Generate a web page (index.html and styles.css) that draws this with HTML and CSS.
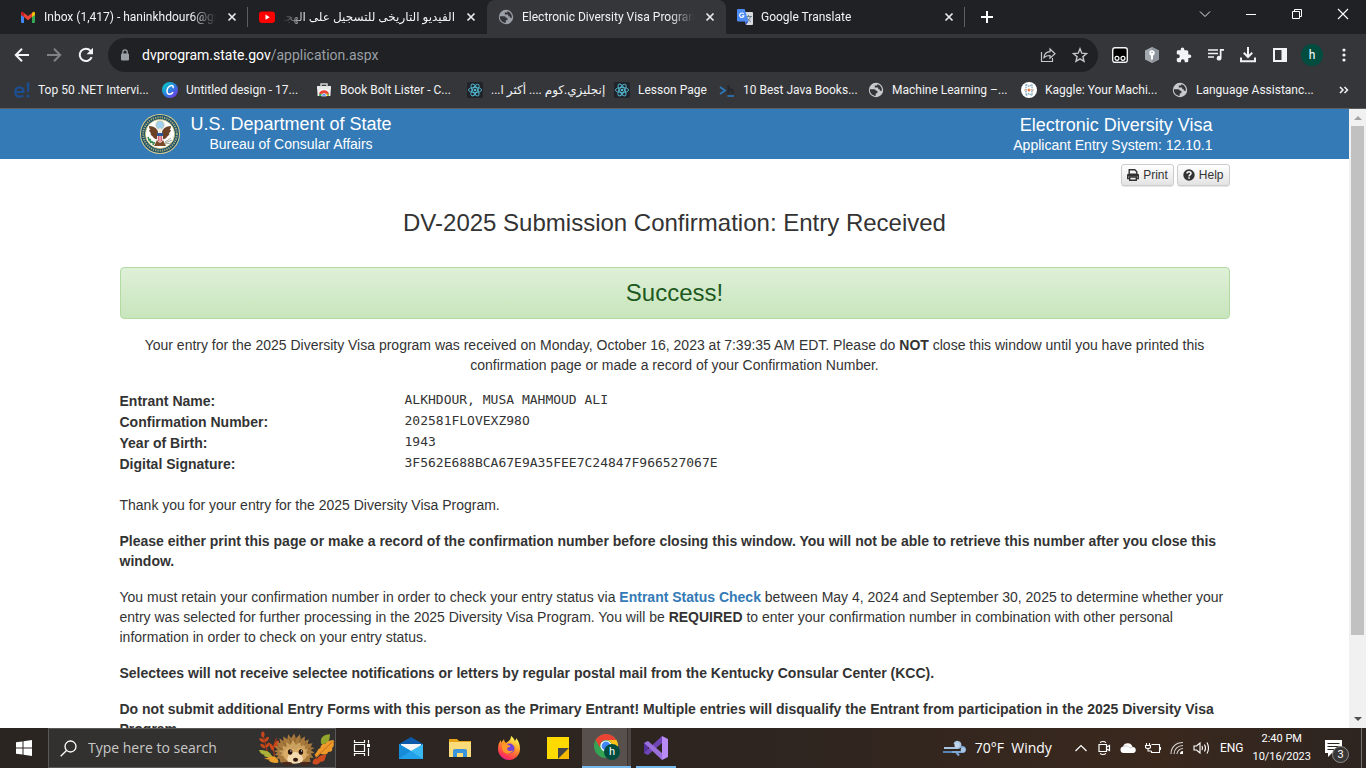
FILE: index.html
```
<!DOCTYPE html>
<html lang="en">
<head>
<meta charset="utf-8">
<title>Electronic Diversity Visa Program</title>
<link rel="stylesheet" href="styles.css">
</head>
<body>
<svg class="sprite" aria-hidden="true">
  <symbol id="close" viewBox="0 0 16 16"><path d="M4.500 4.500l7 7M11.500 4.500l-7 7" stroke="#e8eaed" stroke-width="1.700" fill="none"/></symbol>
  <symbol id="globe" viewBox="0 0 16 16"><circle cx="8" cy="8" r="7.200" fill="currentColor"/><path d="M1.800 7.200h4.400c1.400 0 1.600.8 1.600 1.600h1.600v2.400H7.800v2.600c-3.400 0-6-2.700-6-6.600zM9.300 2.200v1.200H6.800v2h3.400v1.800h1.600v1.600h2.100c.3-3.300-1.700-5.900-4.600-6.600z" fill="#33343a"/></symbol>
  <symbol id="react" viewBox="0 0 16 16"><rect width="16" height="16" rx="1.500" fill="#20232a"/><g fill="none" stroke="#53b9d1" stroke-width=".9"><ellipse cx="8" cy="8" rx="6.600" ry="2.600"/><ellipse cx="8" cy="8" rx="6.600" ry="2.600" transform="rotate(60 8 8)"/><ellipse cx="8" cy="8" rx="6.600" ry="2.600" transform="rotate(120 8 8)"/></g><circle cx="8" cy="8" r="1.300" fill="#53b9d1"/></symbol>
  <symbol id="chrome" viewBox="0 0 24 24"><circle cx="12" cy="12" r="12" fill="#34a353"/><path d="M1.600 6A12 12 0 0 1 22.400 6H12a6 6 0 0 0-5.200 9z" fill="#ea4335"/><path d="M22.400 6A12 12 0 0 1 12 24l5.200-9A6 6 0 0 0 12 6z" fill="#fbc116"/><circle cx="12" cy="12" r="5.600" fill="#fff"/><circle cx="12" cy="12" r="4.400" fill="#4285f4"/></symbol>
</svg>

<header class="browser">
  <div class="tabstrip">
    <div class="tab sep">
      <svg class="i16" viewBox="0 0 16 16"><path d="M1 4v9a1 1 0 0 0 1 1h2V7z" fill="#4285f4"/><path d="M15 4v9a1 1 0 0 1-1 1h-2V7z" fill="#34a853"/><path d="M12 4l1-1c1-.6 2 .1 2 1.200v1.700l-3 2.200z" fill="#fbbc04"/><path d="M4 8V4l4 3 4-3v4l-4 3.200z" fill="#ea4335"/><path d="M1 5.900V4.200C1 3 2 2.400 3 3l1 1v4.100z" fill="#c5221f"/></svg>
      <span class="tab-title">Inbox (1,417) - haninkhdour6@gmail.com</span>
      <button class="icon-btn" aria-label="Close tab"><svg class="i16"><use href="#close"/></svg></button>
    </div>
    <div class="tab">
      <svg class="i16" viewBox="0 0 16 16"><rect y="2.500" width="16" height="11.500" rx="3" fill="#f00"/><path d="M6.500 5.600v5.200l4.300-2.600z" fill="#fff"/></svg>
      <span class="tab-title rtl" dir="rtl">الفيديو التاريخى للتسجيل على الهجرة العشوائية</span>
      <button class="icon-btn" aria-label="Close tab"><svg class="i16"><use href="#close"/></svg></button>
    </div>
    <div class="tab active">
      <svg class="i16 gray"><use href="#globe"/></svg>
      <span class="tab-title">Electronic Diversity Visa Program Application</span>
      <button class="icon-btn" aria-label="Close tab"><svg class="i16"><use href="#close"/></svg></button>
    </div>
    <div class="tab sep">
      <svg class="i16" viewBox="0 0 16 16"><path d="M6 3h9a1 1 0 0 1 1 1v11a1 1 0 0 1-1 1H9z" fill="#d8dce0"/><path d="M8.500 7.500H15M11.500 6v1.500M13.500 7.500c-.5 2.500-2 4-3.500 5M10 8.500c.8 1.800 2 3.200 4 4" stroke="#68808c" fill="none"/><path d="M1 0h6.600l3.900 12.600H1a1 1 0 0 1-1-1V1a1 1 0 0 1 1-1z" fill="#4c8bf5"/><path d="M8 12.600h3.500L9 16z" fill="#3257c9"/><path d="M6.700 5A2.200 2.200 0 1 0 7 6.700H4.900" stroke="#fff" stroke-width="1.100" fill="none"/></svg>
      <span class="tab-title">Google Translate</span>
      <button class="icon-btn" aria-label="Close tab"><svg class="i16"><use href="#close"/></svg></button>
    </div>
    <button class="icon-btn newtab" aria-label="New tab"><svg viewBox="0 0 14 14" width="14" height="14"><path d="M7 1v12M1 7h12" stroke="#fff" stroke-width="2"/></svg></button>
    <div class="win">
      <button class="icon-btn" aria-label="Search tabs"><svg width="12" height="12" viewBox="0 0 12 12"><path d="M1 3.500l5 5 5-5" stroke="#e8eaed" fill="none"/></svg></button>
      <button class="icon-btn" aria-label="Minimize"><svg width="12" height="12" viewBox="0 0 12 12"><path d="M1 6.500h10" stroke="#fff"/></svg></button>
      <button class="icon-btn" aria-label="Restore"><svg width="12" height="12" viewBox="0 0 12 12"><path d="M1.500 3.500h7v7h-7zM3.500 3.500v-2h7v7h-2" stroke="#fff" fill="none"/></svg></button>
      <button class="icon-btn" aria-label="Close"><svg width="12" height="12" viewBox="0 0 12 12"><path d="M1 1l10 10M11 1L1 11" stroke="#fff" stroke-width="1.100"/></svg></button>
    </div>
  </div>

  <div class="toolbar">
    <button class="icon-btn" aria-label="Back"><svg width="16" height="16" viewBox="0 0 16 16"><path d="M15 8H2M8 1.800L1.800 8 8 14.200" stroke="#f1f3f4" stroke-width="2" fill="none"/></svg></button>
    <button class="icon-btn" aria-label="Forward"><svg width="16" height="16" viewBox="0 0 16 16"><path d="M1 8h13M8 1.800L14.200 8 8 14.200" stroke="#808286" stroke-width="2" fill="none"/></svg></button>
    <button class="icon-btn" aria-label="Reload"><svg width="16" height="16" viewBox="0 0 16 16"><path d="M13.700 10.200A6.200 6.200 0 1 1 12.600 3.800L14 5.500" stroke="#f1f3f4" stroke-width="2" fill="none"/><path d="M15 .8v6.400H8.600z" fill="#f1f3f4"/></svg></button>
    <div class="omnibox">
      <svg width="10" height="12" viewBox="0 0 10 12"><rect x="1" y="4.500" width="8" height="7" rx="1" fill="#9aa0a6"/><path d="M2.800 5V3a2.200 2.200 0 0 1 4.400 0v2" stroke="#9aa0a6" stroke-width="1.300" fill="none"/></svg>
      <span class="url">dvprogram.state.gov<span class="path">/application.aspx</span></span>
      <button class="icon-btn" aria-label="Share"><svg width="16" height="16" viewBox="0 0 16 16"><path d="M1.500 5v9.500h11V11M4 10.500c.3-4 2.500-5.800 6-5.900V2l5 4.700-5 4.500V8.500c-2.700 0-4.500.5-6 2z" stroke="#c4c7cb" stroke-width="1.200" fill="none"/></svg></button>
      <button class="icon-btn" aria-label="Bookmark this page"><svg width="16" height="16" viewBox="0 0 16 16"><path d="M8 1.800l1.800 4.400 4.700.4-3.600 3.100 1.100 4.600L8 11.900l-4 2.400 1.100-4.600L1.500 6.600l4.700-.4z" stroke="#c4c7cb" stroke-width="1.400" fill="none"/></svg></button>
    </div>
    <div class="extensions">
      <svg class="i16" viewBox="0 0 16 16"><rect x=".7" y=".7" width="14.600" height="14.600" rx="2.200" fill="#000" stroke="#f1f3f4" stroke-width="1.400"/><g fill="none" stroke="#fff" stroke-width="1.200"><circle cx="5" cy="11.300" r="2"/><circle cx="11" cy="11.300" r="2"/></g></svg>
      <svg class="i16" viewBox="0 0 16 16"><path d="M8 0l7 3.500v9L8 16l-7-3.500v-9z" fill="#a3a8ae"/><path d="M8 0l7 3.500v9L8 16z" fill="#8d949c"/><circle cx="8" cy="6" r="2.700" fill="#fff"/><rect x="7" y="7" width="2" height="5.500" fill="#fff"/><circle cx="8" cy="5.500" r=".8" fill="#8d949c"/></svg>
      <svg class="i16" viewBox="0 0 16 16"><path d="M13.500 7.500h-1.200V4.700A1.500 1.500 0 0 0 10.800 3.200H8.300V2.300a1.800 1.800 0 1 0-3.600 0v.9H2.200A1.400 1.400 0 0 0 .8 4.600v2.600h1a2 2 0 0 1 0 4h-1v2.600a1.400 1.400 0 0 0 1.400 1.400h2.700v-1a1.900 1.900 0 0 1 3.800 0v1h2.100a1.500 1.500 0 0 0 1.500-1.500v-2.600h1.200a1.800 1.800 0 0 0 0-3.600z" fill="#f1f3f4"/></svg>
      <svg class="i16" viewBox="0 0 16 16"><path d="M0 3h10M0 6.500h10M0 10h6" stroke="#f1f3f4" stroke-width="1.600"/><path d="M16 2v1.700h-2.500v7.500a2.400 2.400 0 1 1-1.700-2.300V2z" fill="#f1f3f4"/></svg>
      <svg class="i16" viewBox="0 0 16 16"><path d="M8 0v9.500M3.800 5.800L8 10l4.200-4.200M1 10.500v3.700h14v-3.700" stroke="#f1f3f4" stroke-width="2" fill="none"/></svg>
      <svg class="i16" viewBox="0 0 16 16"><path d="M1 1h14v14H1zM3 3v10h6.500V3z" fill="#f1f3f4" fill-rule="evenodd"/></svg>
    </div>
    <button class="avatar">h</button>
    <button class="icon-btn menu" aria-label="Menu"><svg width="4" height="14" viewBox="0 0 4 14"><g fill="#f1f3f4"><circle cx="2" cy="2" r="1.600"/><circle cx="2" cy="7" r="1.600"/><circle cx="2" cy="12" r="1.600"/></g></svg></button>
  </div>

  <nav class="bookmarks">
    <a href="#"><svg class="i16" viewBox="0 0 16 16"><path d="M1 10h8.500c.2-3-1.400-4.700-4-4.700S1.300 7.300 1.300 10c0 3 1.600 4.700 4.400 4.700 1.500 0 2.700-.4 3.700-1.200" stroke="#1c4f91" stroke-width="2.200" fill="none"/><path d="M12.700.5h2.800l-.5 9.800h-1.800z" fill="#1c4f91"/><circle cx="14" cy="14" r="1.600" fill="#1c4f91"/></svg><span>Top 50 .NET Intervi...</span></a>
    <a href="#"><svg class="i16" viewBox="0 0 16 16"><defs><linearGradient id="cv" x1="0" y1="0" x2="1" y2="1"><stop offset=".15" stop-color="#0bc3cf"/><stop offset=".55" stop-color="#2f76e0"/><stop offset="1" stop-color="#8a2be8"/></linearGradient></defs><circle cx="8" cy="8" r="8" fill="url(#cv)"/><path d="M11 6.300c.7-2-.2-3-1.500-2.800C6.800 3.700 5 6.500 5 9c0 2.200 1 3.300 2.500 3.300s2.800-.9 3.500-2.200" stroke="#fff" stroke-width="1.500" fill="none"/></svg><span>Untitled design - 17...</span></a>
    <a href="#"><svg class="i16" viewBox="0 0 16 16"><path d="M1 4h14l-.6 10H1.600z" fill="#f2f2f2"/><path d="M1 4h14v3H1z" fill="#e9e9e9"/><path d="M5 5V2h6v3" stroke="#d3d3d3" stroke-width="1.500" fill="none"/><path d="M3 14a5 5 0 0 1 10 0z" fill="#34a853"/><path d="M3 12a5.200 5.200 0 0 1 10 0z" fill="#ea4335"/><path d="M10 11l3 3h-3z" fill="#fbbc04"/><path d="M5.500 14a2.500 2.500 0 0 1 5 0z" fill="#4285f4" stroke="#fff" stroke-width=".7"/></svg><span>Book Bolt Lister - C...</span></a>
    <a href="#"><svg class="i16"><use href="#react"/></svg><span dir="rtl">إنجليزي.كوم .... أكثر ا...</span></a>
    <a href="#"><svg class="i16"><use href="#react"/></svg><span>Lesson Page</span></a>
    <a href="#"><svg class="i16" viewBox="0 0 16 16"><path d="M1 5l5 3.500L1 12" stroke="#2d78ba" stroke-width="1.800" fill="none"/><path d="M9.500 3v9M9.500 8.500c2-2 4-1.500 4 .5v3" stroke="#26282c" stroke-width="2" fill="none"/><path d="M8.500 14H15" stroke="#2d78ba" stroke-width="1.600"/></svg><span>10 Best Java Books...</span></a>
    <a href="#"><svg class="i16 light"><use href="#globe"/></svg><span>Machine Learning –...</span></a>
    <a href="#"><svg class="i16" viewBox="0 0 16 16"><circle cx="8" cy="8" r="8" fill="#fff"/><g fill="none" stroke="#7aa3b8" stroke-dasharray="1.500 .7"><path d="M5 2.500l3 2 3-2M5 2.500v11M11 2.500v11M5 13.500l3-2 3 2" stroke-width="1.300"/></g><circle cx="8" cy="8" r="1.500" fill="#e77d49"/><path d="M3 8h2.500M10.500 8H13" stroke="#d9a589"/></svg><span>Kaggle: Your Machi...</span></a>
    <a href="#"><svg class="i16 light"><use href="#globe"/></svg><span>Language Assistanc...</span></a>
    <button class="icon-btn more" aria-label="More bookmarks"><svg width="10" height="8" viewBox="0 0 10 8"><path d="M1 1l3 3-3 3M5.500 1l3 3-3 3" stroke="#f1f3f4" stroke-width="1.500" fill="none"/></svg></button>
  </nav>
</header>

<div class="viewport">
  <div class="page">
    <div class="banner">
      <div class="banner-inner">
        <svg class="seal" viewBox="0 0 40 40"><circle cx="20" cy="20" r="20" fill="#d6cb8c"/><circle cx="20" cy="20" r="19" fill="#174d6c"/><circle cx="20" cy="20" r="16.800" fill="none" stroke="#a9ae77" stroke-width="2" stroke-dasharray="1.300 1"/><circle cx="20" cy="20" r="14.600" fill="#fff" stroke="#d2c06d" stroke-width=".8"/><circle cx="20" cy="11" r="4.200" fill="#9fd0ef" stroke="#cbb66a" stroke-width=".5"/><path d="M18.500 15.500c0-1.800 3.400-1.800 3.400.2l-.6 3.300h-3z" fill="#efe9dc"/><path d="M18 18c-1-4-4-5.500-9-6 .2 2 .5 3 1.500 4-.7 0-1 0-1.500-.2.5 2 1.200 3 2.300 3.700l-1-.1c.8 1.900 1.900 3 3.300 3.500l-.7.4c2 1.700 3.400 2.200 5.300 1.700zM22 18c1-4 4-5.500 9-6-.2 2-.5 3-1.500 4 .7 0 1 0 1.500-.2-.5 2-1.200 3-2.300 3.700l1-.1c-.8 1.900-1.900 3-3.300 3.500l.7.400c-2 1.700-3.400 2.200-5.300 1.700z" fill="#6c4226"/><path d="M17 26l-3 6h12l-3-6z" fill="#7a4b2a"/><path d="M17 19h6v6c0 2-1.500 3-3 4-1.500-1-3-2-3-4z" fill="#f6dfe0"/><path d="M17 19h6v3h-6z" fill="#2c5799"/><path d="M18.500 22v5M20 22v6.500M21.500 22v5" stroke="#c94154" stroke-width=".8"/><path d="M8 23c1 4 3 6 7 6M8 26l3-.5M10 29l2.500-2M13 31l1-3" stroke="#3c8b4e" stroke-width="1.600" fill="none"/><path d="M25 28l6-4M25 29l7-3M25 30l6-1" stroke="#8a8f7c" stroke-width=".8"/></svg>
        <div class="agency"><div class="big">U.S. Department of State</div><div>Bureau of Consular Affairs</div></div>
        <div class="system"><div class="big">Electronic Diversity Visa</div><div>Applicant Entry System: 12.10.1</div></div>
      </div>
    </div>
    <main class="content">
      <div class="actions">
        <button class="btn"><svg width="12" height="12" viewBox="0 0 12 12"><path d="M2.200 5V.7h5.600l2 2V5M2.200 9.500H.7V6.300q0-1 1-1h8.600q1 0 1 1v3.200H9.800M2.700 8h6.600v3.300H2.700z" fill="none" stroke="#333" stroke-width="1.400"/><path d="M1 5h10v2.500H1z" fill="#333"/></svg>Print</button>
        <button class="btn"><svg width="12" height="12" viewBox="0 0 12 12"><circle cx="6" cy="6" r="5.700" fill="#333"/><path d="M4 4.600C4 2.200 8 2.200 8 4.500 8 6 6 5.800 6 7.400" stroke="#fff" stroke-width="1.500" fill="none"/><rect x="5.200" y="8.300" width="1.600" height="1.500" fill="#fff"/></svg>Help</button>
      </div>
      <h1>DV-2025 Submission Confirmation: Entry Received</h1>
      <div class="alert">Success!</div>
      <p class="center">Your entry for the 2025 Diversity Visa program was received on Monday, October 16, 2023 at 7:39:35 AM EDT. Please do <b>NOT</b> close this window until you have printed this confirmation page or made a record of your Confirmation Number.</p>
      <dl>
        <dt>Entrant Name:</dt><dd>ALKHDOUR, MUSA MAHMOUD ALI</dd>
        <dt>Confirmation Number:</dt><dd>202581FLOVEXZ98O</dd>
        <dt>Year of Birth:</dt><dd>1943</dd>
        <dt>Digital Signature:</dt><dd>3F562E688BCA67E9A35FEE7C24847F966527067E</dd>
      </dl>
      <p>Thank you for your entry for the 2025 Diversity Visa Program.</p>
      <p><b>Please either print this page or make a record of the confirmation number before closing this window. You will not be able to retrieve this number after you close this window.</b></p>
      <p>You must retain your confirmation number in order to check your entry status via <a href="#">Entrant Status Check</a> between May 4, 2024 and September 30, 2025 to determine whether your entry was selected for further processing in the 2025 Diversity Visa Program. You will be <b>REQUIRED</b> to enter your confirmation number in combination with other personal information in order to check on your entry status.</p>
      <p><b>Selectees will not receive selectee notifications or letters by regular postal mail from the Kentucky Consular Center (KCC).</b></p>
      <p><b>Do not submit additional Entry Forms with this person as the Primary Entrant! Multiple entries will disqualify the Entrant from participation in the 2025 Diversity Visa Program.</b></p>
    </main>
  </div>
  <div class="scrollbar">
    <svg width="17" height="17" viewBox="0 0 17 17"><path d="M5 11l4-4 4 4z" fill="#a3a3a3"/></svg>
    <div class="thumb"></div>
    <svg width="17" height="17" viewBox="0 0 17 17"><path d="M5 6l4 4 4-4z" fill="#505050"/></svg>
  </div>
</div>

<footer class="taskbar">
  <button class="task start" aria-label="Start"><svg width="16" height="16" viewBox="0 0 16 16"><path d="M0 2.300L6.500 1.400v6.100H0zM7.500 1.200L16 0v7.500H7.500zM0 8.500h6.500v6.100L0 13.700zM7.500 8.500H16V16l-8.500-1.200z" fill="#fff"/></svg></button>
  <label class="search">
    <svg width="17" height="17" viewBox="0 0 17 17"><circle cx="10.500" cy="6.500" r="5.500" stroke="#fff" stroke-width="1.300" fill="none"/><path d="M6.500 10.500L.7 16.300" stroke="#fff" stroke-width="1.300"/></svg>
    <input type="text" placeholder="Type here to search" aria-label="Type here to search">
    <svg width="76" height="36" viewBox="0 0 78 36">
      <path d="M9 24C7 16 6 10 4 5M16 26c-3-8 0-13 2-18" stroke="#a63a16" stroke-width="1.200" fill="none"/>
      <g fill="#c8481b"><ellipse cx="4" cy="4" rx="1.700" ry="3"/><ellipse cx="3" cy="10" rx="3" ry="1.600" transform="rotate(35 3 10)"/><ellipse cx="8" cy="9" rx="3" ry="1.500" transform="rotate(-50 8 9)"/><ellipse cx="4" cy="16" rx="3" ry="1.600" transform="rotate(35 4 16)"/><ellipse cx="9" cy="15" rx="3" ry="1.500" transform="rotate(-50 9 15)"/><ellipse cx="18" cy="14" rx="2" ry="4" transform="rotate(30 18 14)"/><ellipse cx="13" cy="17" rx="1.600" ry="4" transform="rotate(-25 13 17)"/></g>
      <path d="M0 20c6 0 12 1 14 8-6 0-8-1-9-2l1-1c-3 0-5-2-6-5z" fill="#aab136"/>
      <path d="M5 28c4 2 7-4 13 0 2 2 2 4 2 5-5 1-8-1-10-2l1-1c-3 0-5-1-6-2z" fill="#eba02b"/>
      <path d="M64 14c-2-6 2-10 9-10-1 5 0 9-7 10z" fill="#91a52d"/>
      <path d="M57 25c3-3 3-6 6-7 0-3 3-5 5-4 2-4 6-4 9-4-1 4 1 6-2 8 1 3-1 4-4 4-1 3-4 3-8 2l-4 4z" fill="#ed9a2b"/><path d="M58 28L75 12" stroke="#b85f18" stroke-width=".8"/>
      <path d="M55 34c0-5 3-6 5-5 1-3 5-4 9-4-1 3-1 8-6 7-2 3-5 4-8 2z" fill="#cf4b1d"/>
      <path d="M16 25l3-2-4-2 4-1-3-4 4 0-2-4 4 1-1-5 4 3 0-5 4 3 1-5 3 4 3-5 2 5 4-4 1 5 4-3 0 5 4-2-1 5 5-1-2 4 4 1-4 2 4 3-4 1 3 4-4 0 1 4-7 1H22l-1-4-4 0 3-3z" fill="#a7793c"/>
      <path d="M22 26l2-3-4-2 5-1-1-4 4 1 0-5 4 3 3-5 3 5 4-4 1 5 5-2-1 5 4 0-3 4 4 2-4 2z" fill="#caa15e"/>
      <g stroke="#76501f" stroke-width=".7"><path d="M20 17l4 3M25 12l3 4M31 8l2 5M37 7v5M43 8l-2 5M49 12l-3 4M54 17l-4 3"/></g>
      <path d="M25 25c0-7 7-9 12-5 5-4 12-2 12 5 0 5-5 7-12 7s-12-2-12-7z" fill="#d9ad68"/>
      <path d="M29 30c0-5 4-8 8-8s8 3 8 8-16 6-16 0z" fill="#f3d9ae"/>
      <ellipse cx="32" cy="22" rx="2.300" ry="2.800" fill="#27120c"/><ellipse cx="43" cy="22" rx="2.300" ry="2.800" fill="#27120c"/><circle cx="32.700" cy="21" r=".7" fill="#fff"/><circle cx="43.700" cy="21" r=".7" fill="#fff"/>
      <ellipse cx="37.500" cy="30" rx="2.600" ry="2" fill="#32160d"/><ellipse cx="29" cy="34" rx="5" ry="2" fill="#4a291c"/><ellipse cx="47" cy="34" rx="5" ry="2" fill="#4a291c"/>
    </svg>
  </label>
  <button class="task" aria-label="Task View"><svg width="18" height="16" viewBox="0 0 18 16"><path d="M1.500 0v2.500h10V0M1.500 16v-2.500h10V16M1.500 4.500h10v7h-10zM15.500 0v3.500M15.500 8v8" stroke="#fff" stroke-width="1.200" fill="none"/><rect x="14" y="4" width="3" height="3" fill="#fff"/></svg></button>
  <button class="task" aria-label="Mail"><svg width="24" height="24" viewBox="0 0 24 24"><path d="M0 8L12 1l12 7v6H0z" fill="#0b59a8"/><path d="M2 8h20v8H2z" fill="#f3f5f7"/><path d="M0 8l12 7L24 8v15H0z" fill="#3ab8f2"/><path d="M0 23l12-8 12 8z" fill="#22a1ea"/><path d="M0 8l12 7L0 23z" fill="#168bd8"/></svg></button>
  <button class="task" aria-label="File Explorer"><svg width="22" height="20" viewBox="0 0 22 20"><path d="M0 1h8l2 2h12v16H0z" fill="#e5a417"/><path d="M0 4h22v15H0z" fill="#fbdc78"/><path d="M4 19v-6q0-2 2-2h10q2 0 2 2v6h-4v-4H8v4z" fill="#3a94dc"/></svg></button>
  <button class="task" aria-label="Firefox"><svg width="24" height="24" viewBox="0 0 24 24"><defs><linearGradient id="ff" x1=".8" y1="0" x2=".3" y2="1"><stop offset=".1" stop-color="#fff44f"/><stop offset=".45" stop-color="#ff9526"/><stop offset=".85" stop-color="#ff3750"/><stop offset="1" stop-color="#e3219b"/></linearGradient></defs><path d="M14 0c2 1 3 3 4 5 1-1 1-2 1-3 3 3 4 7 4 11 0 6-5 11-11 11S1 19 1 13c0-4 1-7 3-9v3c1-2 2-2 3-4 0 2 1 3 2 4 2-1 5-3 5-7z" fill="url(#ff)"/><circle cx="12.500" cy="12.500" r="5" fill="#7542d6"/><path d="M5 8c3-2 5 0 6 1 2 0 2 1 2 2-2 0-3 1-3 2 1 3 5 2 6 1-1 4-7 5-10 1-1-2-1-4-1-7z" fill="#ff9828"/></svg></button>
  <button class="task" aria-label="Sticky Notes"><svg width="22" height="22" viewBox="0 0 22 22"><path d="M0 0h22v11L11 22H0z" fill="#ffda00"/><path d="M11 22V11h11z" fill="#454545"/><path d="M11 22L22 11v11z" fill="#f5b900"/></svg></button>
  <button class="task running" aria-label="Google Chrome"><svg width="26" height="26" viewBox="0 0 26 26"><use href="#chrome" width="24" height="24"/><circle cx="18" cy="18" r="8" fill="#004d40"/></svg><span class="profile">h</span></button>
  <button class="task open" aria-label="Visual Studio"><svg width="24" height="24" viewBox="0 0 24 24"><path d="M0 7l4-2v14l-4-2z" fill="#52319a"/><path d="M0 17L18 0v7L4 19z" fill="#7045b5"/><path d="M4 5l14 12v7L0 7z" fill="#9a70da"/><path d="M18 0l6 3v18l-6 3z" fill="#b98af3"/></svg></button>

  <div class="tray">
    <svg width="24" height="17" viewBox="0 0 24 17"><path d="M1 8h13.500a3 3 0 1 0-3-4" stroke="#a8c5e3" stroke-width="2.200" fill="none"/><path d="M5 12h14.500a2.500 2.500 0 1 0-2-4" stroke="#7ea7d3" stroke-width="2.200" fill="none"/><path d="M0 12h9" stroke="#5385b7" stroke-width="2"/><circle cx="14" cy="5" r="2.600" fill="#c3d7eb"/><circle cx="20" cy="10" r="2.400" fill="#a8c5e3"/><path d="M13 12l3 3.500" stroke="#7ea7d3" stroke-width="2"/></svg>
    <span class="weather">70°F&nbsp; Windy</span>
    <div class="tray-icons">
      <svg width="14" height="14" viewBox="0 0 14 14"><path d="M1.500 10L7 4.500l5.500 5.500" stroke="#fff" stroke-width="1.200" fill="none"/></svg>
      <svg width="14" height="16" viewBox="0 0 14 16"><path d="M2 4.500h7.500v7H2zM9.500 7l3-1.500v5l-3-1.500M3 2.500q3-2 6 0M3 13.500q3 2 6 0" stroke="#fff" stroke-width="1.200" fill="none"/></svg>
      <svg width="16" height="12" viewBox="0 0 16 12"><path d="M3.500 11A3.300 3.300 0 0 1 3 4.500a5 5 0 0 1 9.500.5 3 3 0 0 1 .5 6z" fill="#fff"/><path d="M3 5c3-2 5-1 6 0s2 1 4 0" stroke="#ccc" fill="none"/></svg>
      <svg width="16" height="12" viewBox="0 0 16 12"><path d="M6.500 2.500h8v8h-8V9M15.500 5v3M1.500 1v2M4.500 1v2M.5 3.500h5v1.500q0 1.500-2.500 1.500T.5 5zM3 6.500V9h3.500" stroke="#fff" stroke-width="1.100" fill="none"/></svg>
      <svg width="14" height="14" viewBox="0 0 14 14"><g fill="none" stroke="#d8d6d4" stroke-width="1.100"><path d="M1 13C1 6 6 1.500 13 1.500M4 13c0-5 4-8.500 9-8.500M7 13c0-3 3-5.500 6-5.500"/></g><path d="M10 13c0-2 1-3 3-3v3z" fill="#fff"/></svg>
      <svg width="18" height="14" viewBox="0 0 18 14"><path d="M1 5h2.500L7 2v10L3.500 9H1z" stroke="#fff" stroke-width="1.100" fill="none"/><path d="M9 5q1 2 0 4M11.500 3.500q2 3.500 0 7M14 1.500q3 5.500 0 11" stroke="#fff" stroke-width="1.100" fill="none"/></svg>
    </div>
    <span class="lang">ENG</span>
    <div class="clock"><span>2:40 PM</span><span>10/16/2023</span></div>
    <div class="notif"><svg width="17" height="17" viewBox="0 0 17 17"><path d="M0 0h17v13H7l-4 4v-4H0z" fill="#fff"/><path d="M2.500 3.500h12M2.500 6.500h12M2.500 9.500h8" stroke="#2b2522" stroke-width="1.200"/></svg><span class="badge">3</span></div>
    <div class="desktop"></div>
  </div>
</footer>
</body>
</html>
```
FILE: styles.css
```
* { box-sizing: border-box; }
body {
  margin: 0;
  height: 100vh;
  display: flex;
  flex-direction: column;
  overflow: hidden;
  background: #fff;
  color: #333;
  font: 14px/20px "Liberation Sans", Arial, sans-serif;
}
svg { display: block; flex: none; }
.sprite { position: absolute; width: 0; height: 0; }
.i16 { width: 16px; height: 16px; }
.gray { color: #9aa0a6; }
.light { color: #c8cacd; }
button { font: inherit; cursor: pointer; }
.icon-btn {
  display: flex;
  align-items: center;
  justify-content: center;
  padding: 0;
  border: 0;
  background: none;
}

/* Browser frame */
.browser {
  flex: none;
  background: #35363a;
  border-bottom: 1px solid #5b5c60;
  color: #f1f3f4;
  font: 12px/16px Roboto, "Open Sans", "DejaVu Sans", sans-serif;
}
.tabstrip { display: flex; height: 34px; padding-left: 9px; background: #202124; }
.tab {
  display: flex;
  align-items: center;
  gap: 8px;
  width: 239px;
  padding: 0 8px 0 11px;
}
.tab.active { background: #35363a; border-radius: 8px 8px 0 0; }
.tab.sep { background: linear-gradient(#5c5e62, #5c5e62) right center / 1px 20px no-repeat; }
.tab-title {
  flex: 1;
  overflow: hidden;
  white-space: nowrap;
  -webkit-mask-image: linear-gradient(to right, #000 86%, transparent);
  mask-image: linear-gradient(to right, #000 86%, transparent);
}
.tab-title.rtl {
  -webkit-mask-image: linear-gradient(to left, #000 86%, transparent);
  mask-image: linear-gradient(to left, #000 86%, transparent);
}
.newtab { width: 28px; margin-left: 8px; }
.win { display: flex; align-items: center; height: 28px; margin-left: auto; }
.win .icon-btn { width: 46px; height: 28px; }
.toolbar { display: flex; align-items: center; height: 42px; padding: 0 12px 0 6px; }
.toolbar > .icon-btn { width: 32px; height: 32px; }
.omnibox {
  flex: 1;
  display: flex;
  align-items: center;
  gap: 12px;
  height: 34px;
  margin-left: 6px;
  padding: 0 8px 0 12px;
  border-radius: 17px;
  background: #202124;
}
.omnibox .icon-btn { width: 20px; height: 20px; }
.url { flex: 1; color: #fff; font-size: 14px; line-height: 20px; }
.path { color: #9aa0a6; }
.extensions { display: flex; gap: 16px; margin: 0 13px 0 14px; }
.avatar {
  width: 22px;
  height: 22px;
  padding: 0;
  border: 0;
  border-radius: 50%;
  background: #004d40;
  color: #fff;
}
.toolbar > .menu { width: 20px; margin-left: 11px; }
.bookmarks {
  display: grid;
  grid-template-columns: 148px 154px 151px 147px 105px 149px 153px 151px 1fr 28px;
  align-items: center;
  height: 32px;
  padding: 0 8px 4px 14px;
}
.bookmarks a {
  display: flex;
  align-items: center;
  gap: 8px;
  color: inherit;
  white-space: nowrap;
  text-decoration: none;
}

/* Web page */
.viewport { flex: 1; min-height: 0; display: flex; }
.page { flex: 1; min-width: 0; overflow: hidden; }
.banner { background: #337ab7; color: #fff; }
.banner-inner {
  display: flex;
  align-items: center;
  max-width: 1110px;
  height: 50px;
  margin: 0 auto;
  padding: 0 17px 0 20px;
}
.seal { width: 40px; height: 40px; margin-right: 11px; }
.agency { text-align: center; }
.system { margin-left: auto; padding-top: 2px; text-align: right; }
.big { font-size: 18px; }
.content { max-width: 1110px; margin: 0 auto; padding-top: 5px; }
.actions { display: flex; justify-content: flex-end; gap: 3px; }
.btn {
  display: flex;
  align-items: center;
  gap: 4px;
  height: 22px;
  padding: 0 5px;
  border: 1px solid #ccc;
  border-radius: 3px;
  background: linear-gradient(#fff, #e3e3e3);
  box-shadow: 0 1px 1px rgba(0, 0, 0, .1);
  color: #333;
  font-size: 12px;
}
h1 { margin: 24px 0 31px; font-size: 24px; font-weight: 400; line-height: 26px; text-align: center; }
.alert {
  padding: 12px;
  border: 1px solid #b2dba1;
  border-radius: 4px;
  background: linear-gradient(#dff0d8, #c8e5bc);
  color: #1d591e;
  font-size: 24px;
  line-height: 26px;
  text-align: center;
}
p { margin: 16px 0; }
.center { margin: 16px 20px; text-align: center; }
dl { display: grid; grid-template-columns: 285px 1fr; grid-auto-rows: 21px; margin: 0 0 20px; }
dt { font-weight: 700; line-height: 21px; }
dd { margin: 0; font: 13px/18px "DejaVu Sans Mono", monospace; }
.content a { color: #337ab7; font-weight: 700; text-decoration: none; }
.scrollbar { flex: none; display: flex; flex-direction: column; width: 17px; background: #f1f1f1; }
.thumb { height: 509px; margin: 0 2px; background: #c1c1c1; }
.scrollbar svg:last-child { margin-top: auto; }

/* Taskbar */
.taskbar {
  flex: none;
  display: flex;
  height: 40px;
  background: linear-gradient(90deg, #2b2522, #2e2520 55%, #3a281d 85%, #2d2521);
  color: #fff;
  font: 12px/18px Roboto, "Open Sans", sans-serif;
}
.task {
  position: relative;
  display: flex;
  align-items: center;
  justify-content: center;
  width: 49px;
  padding: 0;
  border: 0;
  background: none;
}
.start { width: 48px; }
.search {
  display: flex;
  align-items: center;
  width: 288px;
  margin-right: 1px;
  padding: 0 0 0 11px;
  border: 1px solid #5a5857;
  background: #323130;
}
.search input {
  flex: 1;
  min-width: 0;
  padding: 0 0 0 11px;
  border: 0;
  background: none;
  color: #fff;
  font: 14px/20px "Open Sans", "Noto Sans", sans-serif;
}
.search input::placeholder { color: #c9c8c7; opacity: 1; }
.running { background: linear-gradient(90deg, #57504c 45px, #3a3330 45px, #3a3330 46px, #4c4541 46px); border-bottom: 2px solid #76b9ed; }
.open { background: linear-gradient(#76b9ed, #76b9ed) center bottom / 40px 2px no-repeat; }
.profile { position: absolute; left: 25px; top: 15px; width: 10px; color: #fff; font-size: 11px; text-align: center; }
.tray { display: flex; align-items: center; margin-left: auto; }
.weather { margin: 0 22px 0 8px; font: 14px/20px "Open Sans", "Noto Sans", sans-serif; }
.tray-icons { display: flex; align-items: center; gap: 9px; }
.lang { margin: 0 9px; }
.clock { display: flex; flex-direction: column; align-items: center; font-size: 11px; }
.notif { position: relative; margin: 0 19px 0 14px; }
.badge {
  position: absolute;
  left: 7px;
  top: 6px;
  width: 17px;
  height: 17px;
  border: 1px solid #8f8c8a;
  border-radius: 50%;
  background: #3a3837;
  font-size: 11px;
  line-height: 15px;
  text-align: center;
}
.desktop { width: 5px; height: 40px; border-left: 1px solid #75706d; }
```
